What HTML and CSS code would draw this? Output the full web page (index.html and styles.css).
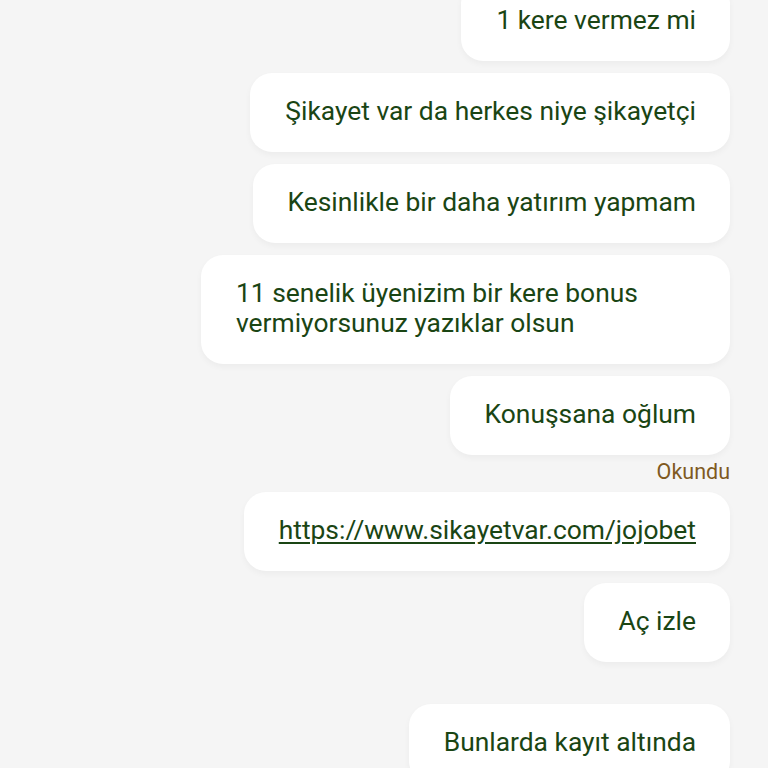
FILE: index.html
```html
<!DOCTYPE html>
<html lang="tr">
<head>
    <meta charset="UTF-8">
    <meta name="viewport" content="width=device-width, initial-scale=1.0">
    <title>Mesajlar</title>
    <link rel="stylesheet" href="styles.css">
</head>
<body>
    <div class="chat">
        <div class="bubble">1 kere vermez mi</div>
        <div class="bubble">Şikayet var da herkes niye şikayetçi</div>
        <div class="bubble">Kesinlikle bir daha yatırım yapmam</div>
        <div class="bubble">11 senelik üyenizim bir kere bonus vermiyorsunuz yazıklar olsun</div>
        <div class="bubble">Konuşsana oğlum</div>
        <div class="status">Okundu</div>
        <div class="bubble"><a href="#">https://www.sikayetvar.com/jojobet</a></div>
        <div class="bubble">Aç izle</div>
        <div class="bubble new-group">Bunlarda kayıt altında</div>
    </div>
</body>
</html>
```

FILE: styles.css
```css
body {
    margin: 0;
    background-color: #f5f5f5;
    font-family: Roboto, "Noto Sans", sans-serif;
    overflow: hidden;
}

.chat {
    display: flex;
    flex-direction: column;
    align-items: flex-end;
    gap: 12px;
    padding-right: 38px;
    margin-top: -18px;
}

.bubble {
    max-width: 460px;
    background-color: #fff;
    color: #1a4514;
    font-size: 26.4px;
    line-height: 30px;
    padding: 23px 34px 26px 35px;
    border-radius: 22px;
    box-shadow: 0 3px 6px rgba(0, 0, 0, 0.04);
}

.bubble a {
    color: #1a4514;
    text-decoration: underline;
    text-underline-offset: 3px;
}

.status {
    color: #7f5a1f;
    font-size: 21.5px;
    line-height: 20px;
    margin: -5px 0 -2px;
}

.new-group {
    margin-top: 30px;
}
```
